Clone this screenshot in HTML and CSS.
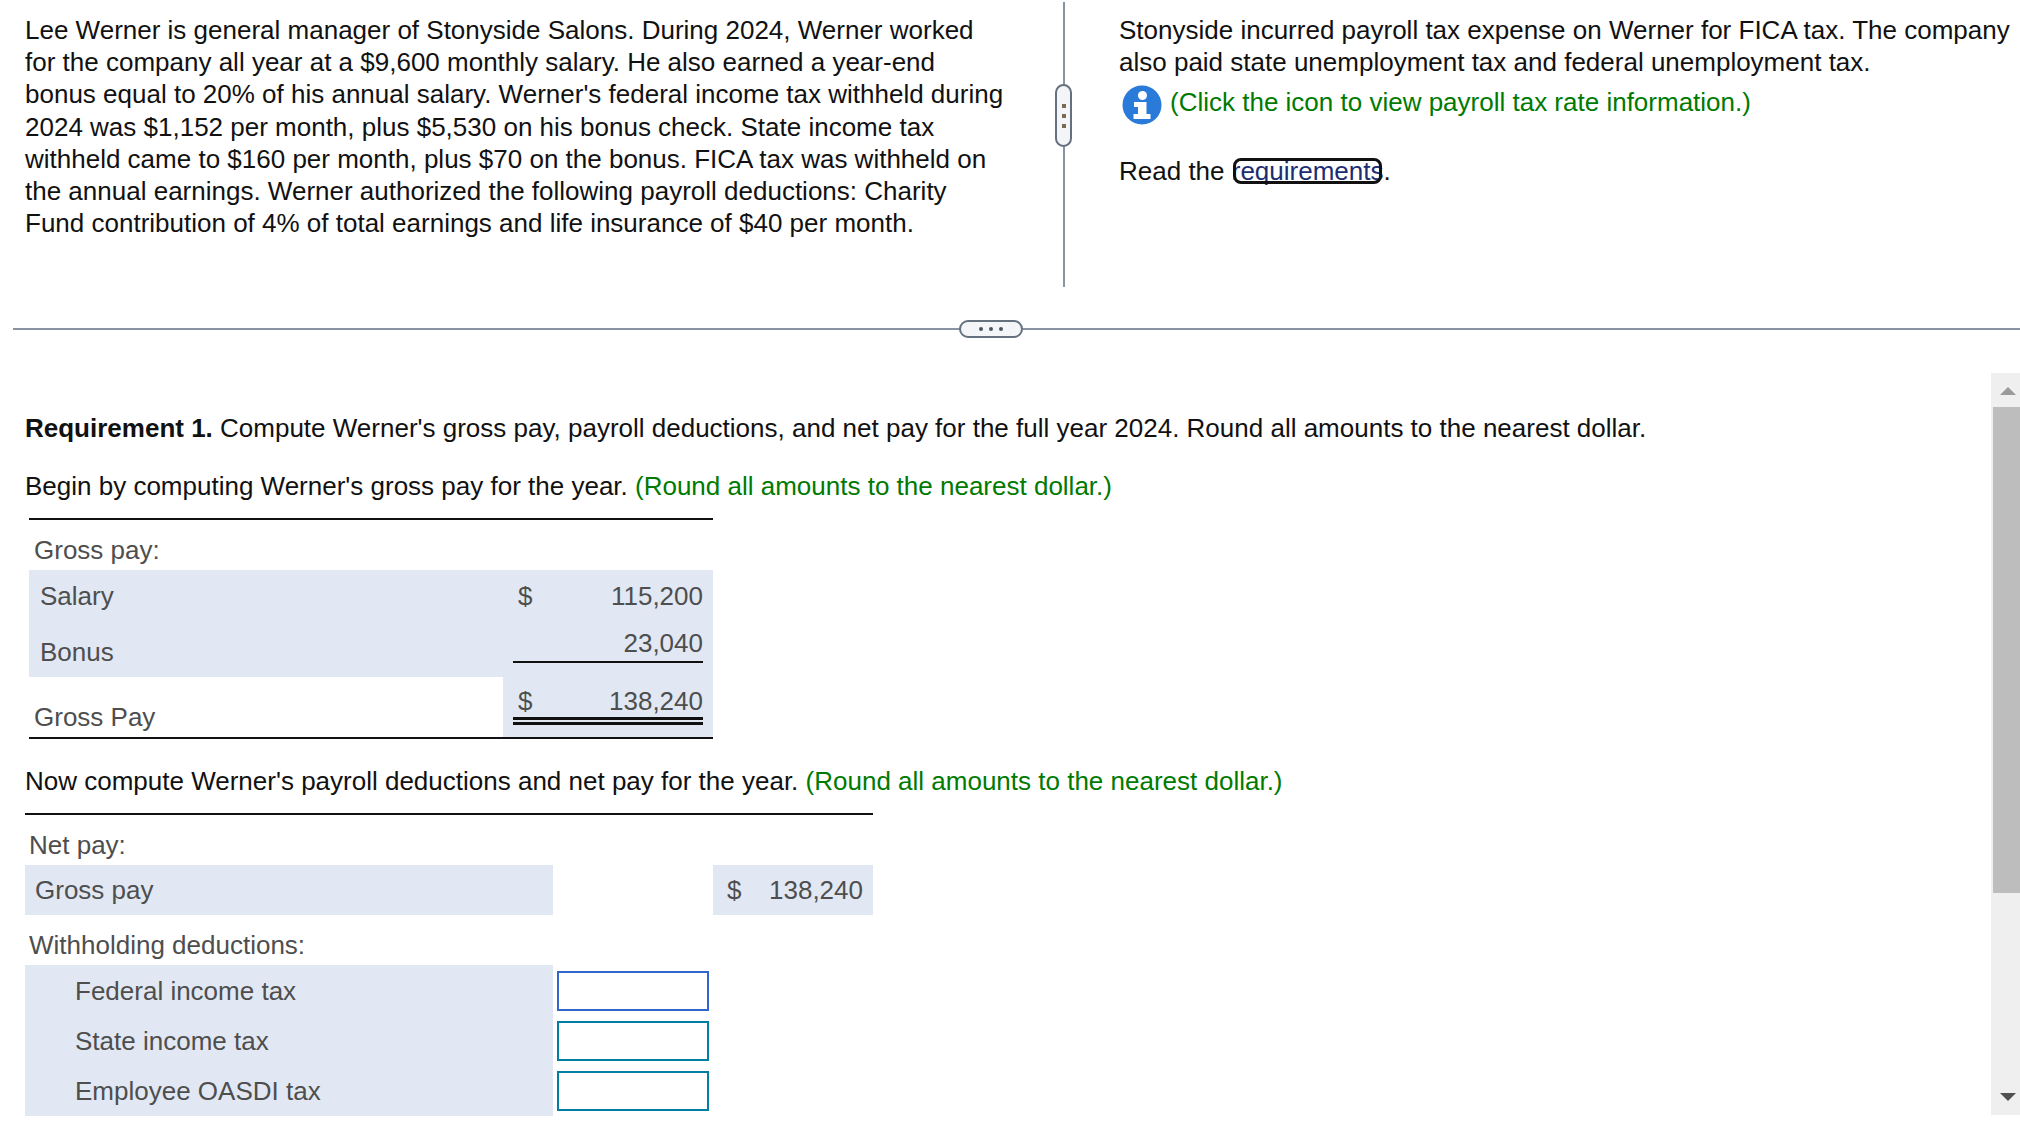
FILE: index.html
```html
<!DOCTYPE html>
<html lang="en">
  <head>
    <meta charset="UTF-8" />
    <title>Payroll Requirement</title>
    <link rel="stylesheet" href="styles.css">
  </head>
  <body>
    <div class="top">
      <div class="top-left">
        Lee Werner is general manager of Stonyside Salons. During 2024, Werner worked<br />
        for the company all year at a $9,600 monthly salary. He also earned a year-end<br />
        bonus equal to 20% of his annual salary. Werner's federal income tax withheld during<br />
        2024 was $1,152 per month, plus $5,530 on his bonus check. State income tax<br />
        withheld came to $160 per month, plus $70 on the bonus. FICA tax was withheld on<br />
        the annual earnings. Werner authorized the following payroll deductions: Charity<br />
        Fund contribution of 4% of total earnings and life insurance of $40 per month.
      </div>
      <div class="top-divider">
        <div class="v-handle"><i></i><i></i><i></i></div>
      </div>
      <div class="top-right">
        <div>Stonyside incurred payroll tax expense on Werner for FICA tax. The company</div>
        <div>also paid state unemployment tax and federal unemployment tax.</div>
        <div class="info-row">
          <svg class="info-icon" viewBox="0 0 40 40" width="40" height="40">
            <circle cx="20" cy="20" r="19.5" fill="#2a7bd9" />
            <circle cx="20.5" cy="10.5" r="4.5" fill="#fff" />
            <path d="M12 17h12.5v12h4v5h-17v-5h4.5v-7H12z" fill="#fff" />
          </svg>
          <span class="green">(Click the icon to view payroll tax rate information.)</span>
        </div>
        <div class="read-row">Read the <a class="req-link">requirements</a>.</div>
      </div>
    </div>

    <div class="h-divider">
      <div class="h-handle"><i></i><i></i><i></i></div>
    </div>

    <div class="main">
      <div class="content">
        <p class="req"><strong>Requirement 1.</strong> Compute Werner's gross pay, payroll deductions, and net pay for the full year 2024. Round all amounts to the nearest dollar.</p>
        <p class="begin">Begin by computing Werner's gross pay for the year. <span class="green">(Round all amounts to the nearest dollar.)</span></p>

        <div class="gross-table">
          <div class="head-row">Gross pay:</div>
          <div class="g-row salary">
            <div class="g-label">Salary</div>
            <div class="g-val"><span>$</span><span>115,200</span></div>
          </div>
          <div class="g-row bonus">
            <div class="g-label">Bonus</div>
            <div class="g-val"><span></span><span>23,040</span></div>
          </div>
          <div class="g-row total">
            <div class="g-label">Gross Pay</div>
            <div class="g-val"><span>$</span><span>138,240</span></div>
          </div>
        </div>

        <p class="now">Now compute Werner's payroll deductions and net pay for the year. <span class="green">(Round all amounts to the nearest dollar.)</span></p>

        <div class="net-table">
          <div class="head-row">Net pay:</div>
          <div class="n-row">
            <div class="n-label">Gross pay</div>
            <div class="n-val"><span>$</span><span>138,240</span></div>
          </div>
          <div class="head-row with">Withholding deductions:</div>
          <div class="d-row">
            <div class="d-label">Federal income tax</div>
            <input class="d-input active" type="text" />
          </div>
          <div class="d-row">
            <div class="d-label">State income tax</div>
            <input class="d-input" type="text" />
          </div>
          <div class="d-row">
            <div class="d-label">Employee OASDI tax</div>
            <input class="d-input" type="text" />
          </div>
        </div>
      </div>

      <div class="scrollbar">
        <div class="arrow up"></div>
        <div class="thumb"></div>
        <div class="arrow down"></div>
      </div>
    </div>
  </body>
</html>
```

FILE: styles.css
```css
html,
body {
  margin: 0;
  height: 1135px;
  overflow: hidden;
  background: #fff;
}
body {
  font-family: "Liberation Sans", Arial, sans-serif;
  font-size: 26px;
  line-height: 32px;
  color: #111;
}
.green {
  color: #007a00;
}

/* top panes */
.top {
  display: flex;
  height: 285px;
  padding-top: 2px;
}
.top-left {
  flex: none;
  width: 1063px;
  padding: 12px 0 0 25px;
  box-sizing: border-box;
  line-height: 32.2px;
  white-space: nowrap;
}
.top-divider {
  position: relative;
  flex: none;
  width: 2px;
  background: #8a93a3;
}
.v-handle {
  position: absolute;
  left: -8px;
  top: 82px;
  width: 17px;
  height: 63px;
  box-sizing: border-box;
  border: 2px solid #66717f;
  border-radius: 9px;
  background: #f3f5f8;
  display: flex;
  flex-direction: column;
  align-items: center;
  justify-content: center;
  gap: 6px;
}
.v-handle i {
  width: 4px;
  height: 4px;
  background: #7a6a50;
}
.top-right {
  padding: 12px 0 0 54px;
  white-space: nowrap;
}
.info-row {
  display: flex;
  align-items: flex-start;
  margin-top: 8px;
  height: 50px;
  padding-left: 3px;
}
.info-icon {
  flex: none;
  margin-right: 8px;
  margin-top: -1px;
}
.read-row {
  padding-top: 19px;
}
.req-link {
  display: inline-block;
  height: 28px;
  line-height: 28px;
  color: #1c2d72;
  outline: 3px solid #111;
  outline-offset: -4px;
  border-radius: 9px;
}

/* splitter */
.h-divider {
  position: relative;
  height: 2px;
  margin: 41px 0 0 13px;
  background: #8a93a3;
}
.h-handle {
  position: absolute;
  left: 946px;
  top: -8px;
  width: 64px;
  height: 18px;
  box-sizing: border-box;
  border: 2px solid #66717f;
  border-radius: 9px;
  background: #f3f5f8;
  display: flex;
  align-items: center;
  justify-content: center;
  gap: 6px;
}
.h-handle i {
  width: 4px;
  height: 4px;
  border-radius: 50%;
  background: #4d5560;
}

/* main scrolling part */
.main {
  display: flex;
  height: 805px;
}
.content {
  flex: 1;
  padding: 82px 0 0 25px;
  white-space: nowrap;
}
.content p {
  margin: 0;
}
.begin {
  margin-top: 26px !important;
}

.gross-table {
  width: 684px;
  margin: 16px 0 0 4px;
  border-top: 2px solid #111;
  border-bottom: 2px solid #111;
  color: #4e4e4e;
}
.head-row {
  height: 50px;
  padding: 14px 0 0 5px;
  box-sizing: border-box;
}
.g-row {
  display: flex;
  background: #e1e8f3;
}
.g-label {
  flex: 1;
  padding-left: 11px;
  display: flex;
  align-items: center;
}
.g-val {
  width: 190px;
  margin: 0 10px 0 9px;
  padding: 0 0 0 5px;
  box-sizing: border-box;
  display: flex;
  justify-content: space-between;
}
.salary {
  height: 51px;
}
.salary .g-val {
  padding-top: 10px;
}
.bonus {
  height: 56px;
}
.bonus .g-label {
  padding-top: 6px;
}
.bonus .g-val {
  height: 42px;
  padding-top: 6px;
  border-bottom: 2px solid #111;
}
.total {
  height: 60px;
  background: linear-gradient(to right, #fff 474px, #e1e8f3 474px);
}
.total .g-label {
  padding: 20px 0 0 5px;
  align-items: flex-start;
  margin-top: 4px;
}
.total .g-val {
  height: 48px;
  padding-top: 8px;
  border-bottom: 8px double #111;
}

.now {
  margin-top: 26px !important;
}
.net-table {
  width: 848px;
  margin-top: 16px;
  border-top: 2px solid #111;
  color: #4e4e4e;
}
.net-table .head-row {
  height: 50px;
  padding-left: 4px;
}
.net-table .with {
  height: 50px;
  padding-top: 14px;
}
.n-row {
  display: flex;
  justify-content: space-between;
  height: 50px;
}
.n-label {
  width: 528px;
  padding: 9px 0 0 10px;
  box-sizing: border-box;
  background: #e1e8f3;
}
.n-val {
  width: 160px;
  padding: 9px 10px 0 14px;
  box-sizing: border-box;
  background: #e1e8f3;
  display: flex;
  justify-content: space-between;
}
.d-row {
  display: flex;
  align-items: flex-start;
  height: 50px;
}
.d-row:last-child {
  height: 51px;
}
.d-label {
  width: 528px;
  height: 100%;
  padding: 10px 0 0 50px;
  box-sizing: border-box;
  background: #e1e8f3;
}
.d-input {
  width: 152px;
  height: 40px;
  margin: 6px 0 0 4px;
  padding: 0;
  box-sizing: border-box;
  border: 2px solid #007fa3;
  background: #fff;
  outline: none;
}
.d-input.active {
  border-color: #3366cc;
}

.scrollbar {
  position: relative;
  width: 29px;
  height: 742px;
  margin-top: 43px;
  background: #efefef;
  flex: none;
}
.thumb {
  position: absolute;
  left: 2px;
  right: 0;
  top: 34px;
  height: 486px;
  background: #bdbdbd;
}
.arrow {
  position: absolute;
  left: 9px;
  width: 0;
  height: 0;
  border-left: 8px solid transparent;
  border-right: 8px solid transparent;
}
.arrow.up {
  top: 14px;
  border-bottom: 8px solid #9a9a9a;
}
.arrow.down {
  bottom: 14px;
  border-top: 8px solid #505050;
}
```
